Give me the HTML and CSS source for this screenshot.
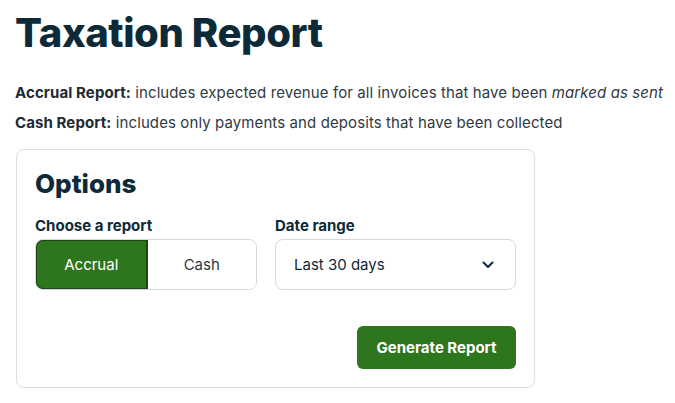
FILE: index.html
```html
<!DOCTYPE html>
<html lang="en">
<head>
    <meta charset="UTF-8">
    <meta name="viewport" content="width=device-width, initial-scale=1.0">
    <title>Taxation Report</title>
    <link rel="stylesheet" href="styles.css">
</head>
<body>
    <div class="page">
        <h1>Taxation Report</h1>
        <p class="note"><strong>Accrual Report:</strong> includes expected revenue for all invoices that have been <em>marked as sent</em></p>
        <p class="note"><strong>Cash Report:</strong> includes only payments and deposits that have been collected</p>

        <div class="options-card">
            <h2>Options</h2>
            <div class="options-grid">
                <div class="field">
                    <label>Choose a report</label>
                    <div class="toggle">
                        <button type="button" class="toggle-btn active">Accrual</button>
                        <button type="button" class="toggle-btn">Cash</button>
                    </div>
                </div>
                <div class="field">
                    <label for="range">Date range</label>
                    <div class="select" id="range">
                        <span>Last 30 days</span>
                        <svg width="12" height="8" viewBox="0 0 12 8"><path d="M1.5 1.5 L6 6 L10.5 1.5" fill="none" stroke="#0d2a38" stroke-width="2" stroke-linecap="round" stroke-linejoin="round"/></svg>
                    </div>
                </div>
            </div>
            <div class="actions">
                <button type="button" class="generate-button">Generate Report</button>
            </div>
        </div>
    </div>
</body>
</html>
```

FILE: styles.css
```css
body {
    font-family: Inter, "Noto Sans", sans-serif;
    color: #0d2a38;
    background-color: #fff;
    margin: 0;
}
.page {
    padding: 8px 15px;
}
h1 {
    font-size: 40px;
    font-weight: 800;
    line-height: 50px;
    margin: 0 0 20px;
    letter-spacing: -0.4px;
}
.note {
    font-size: 15px;
    line-height: 30px;
    margin: 0;
    color: #2f3a42;
    letter-spacing: 0.1px;
    white-space: nowrap;
}
.note strong {
    color: #1e2a33;
}
.options-card {
    margin: 11px 0 0 1px;
    width: 519px;
    box-sizing: border-box;
    border: 1px solid #dcdfe1;
    border-radius: 8px;
    padding: 18px 18px 18px;
}
.options-card h2 {
    font-size: 26px;
    font-weight: 800;
    line-height: 32px;
    margin: 0 0 17px;
}
.options-grid {
    display: grid;
    grid-template-columns: 222px 1fr;
    gap: 18px;
}
.field label {
    display: block;
    font-size: 15px;
    font-weight: 700;
    line-height: 18px;
    margin-bottom: 4px;
}
.toggle {
    display: flex;
    height: 51px;
    border: 1px solid #d4d9dc;
    border-radius: 8px;
    box-sizing: border-box;
    overflow: hidden;
}
.toggle-btn {
    flex: 1;
    font-family: inherit;
    font-size: 15px;
    color: #2f3a42;
    background-color: #fff;
    border: none;
    cursor: pointer;
}
.toggle-btn.active {
    background-color: #2e761e;
    color: #fff;
    border: 2px solid #1d4614;
    border-radius: 8px 0 0 8px;
    margin: -1px 0 -1px -1px;
}
.select {
    display: flex;
    align-items: center;
    justify-content: space-between;
    height: 51px;
    box-sizing: border-box;
    border: 1px solid #d4d9dc;
    border-radius: 8px;
    padding: 0 21px 0 18px;
    font-size: 15px;
}
.actions {
    display: flex;
    justify-content: flex-end;
    margin-top: 36px;
}
.generate-button {
    font-family: inherit;
    font-size: 15px;
    font-weight: 700;
    color: #fff;
    background-color: #2e761e;
    border: none;
    border-radius: 6px;
    height: 43px;
    width: 159px;
    cursor: pointer;
}
```
